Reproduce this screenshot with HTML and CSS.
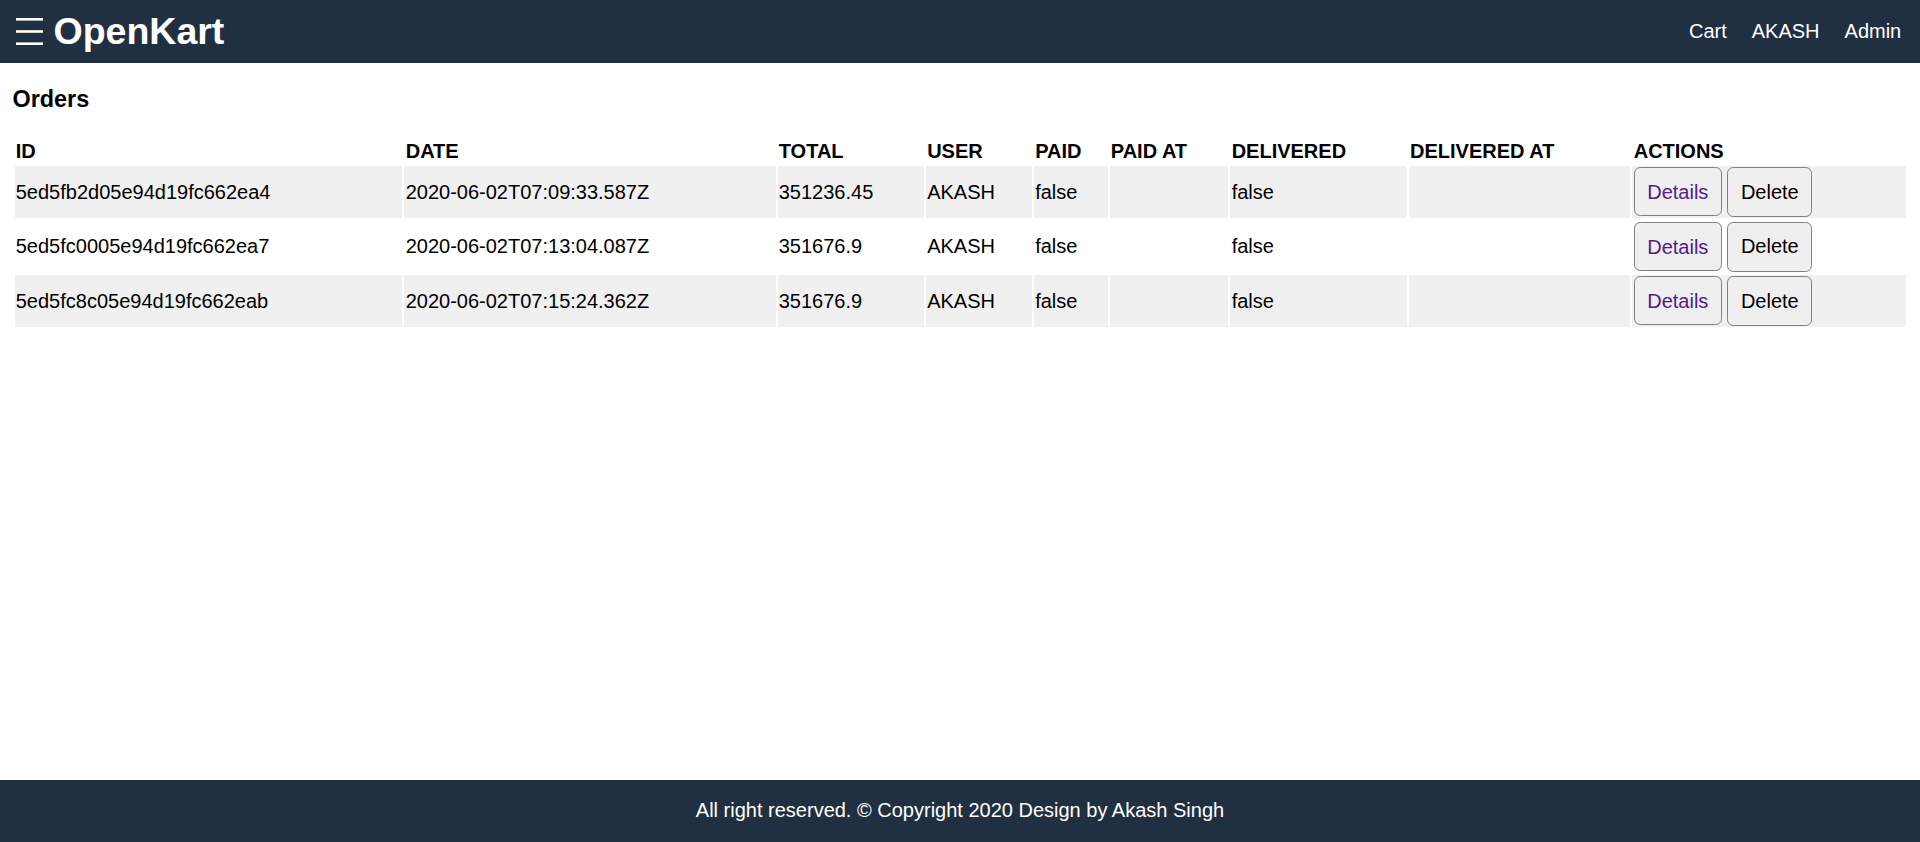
FILE: index.html
```html
<!DOCTYPE html>
<html lang="en">
<head>
<meta charset="utf-8">
<title>OpenKart</title>
<link rel="stylesheet" href="styles.css">
</head>
<body>
<div class="grid-container">
  <header class="header">
    <div class="brand">
      <button class="menu-btn" aria-label="menu">
        <svg width="27" height="27" viewBox="0 0 27 27"><rect x="0" y="0" width="27" height="2.6" fill="#fff"/><rect x="0" y="12.2" width="27" height="2.6" fill="#fff"/><rect x="0" y="24.4" width="27" height="2.6" fill="#fff"/></svg>
      </button>
      <a href="#" class="brand-link">OpenKart</a>
    </div>
    <nav class="header-links"><a href="#">Cart</a><a href="#">AKASH</a><a href="#">Admin</a></nav>
  </header>
  <main class="main">
    <div class="content content-margined">
      <div class="order-header">
        <h3>Orders</h3>
      </div>
      <table class="table">
        <thead>
          <tr>
            <th>ID</th>
            <th>DATE</th>
            <th>TOTAL</th>
            <th>USER</th>
            <th>PAID</th>
            <th>PAID AT</th>
            <th>DELIVERED</th>
            <th>DELIVERED AT</th>
            <th>ACTIONS</th>
          </tr>
        </thead>
        <tbody>
          <tr>
            <td>5ed5fb2d05e94d19fc662ea4</td>
            <td>2020-06-02T07:09:33.587Z</td>
            <td>351236.45</td>
            <td>AKASH</td>
            <td>false</td>
            <td></td>
            <td>false</td>
            <td></td>
            <td><a href="#" class="button link-btn">Details</a> <button class="button">Delete</button></td>
          </tr>
          <tr>
            <td>5ed5fc0005e94d19fc662ea7</td>
            <td>2020-06-02T07:13:04.087Z</td>
            <td>351676.9</td>
            <td>AKASH</td>
            <td>false</td>
            <td></td>
            <td>false</td>
            <td></td>
            <td><a href="#" class="button link-btn">Details</a> <button class="button">Delete</button></td>
          </tr>
          <tr>
            <td>5ed5fc8c05e94d19fc662eab</td>
            <td>2020-06-02T07:15:24.362Z</td>
            <td>351676.9</td>
            <td>AKASH</td>
            <td>false</td>
            <td></td>
            <td>false</td>
            <td></td>
            <td><a href="#" class="button link-btn">Details</a> <button class="button">Delete</button></td>
          </tr>
        </tbody>
      </table>
    </div>
  </main>
  <footer class="footer">All right reserved. &copy; Copyright 2020 Design by Akash Singh</footer>
</div>
</body>
</html>
```
FILE: styles.css
```css
html {
  box-sizing: border-box;
}
*, *::before, *::after {
  box-sizing: inherit;
}
body {
  margin: 0;
  height: 100vh;
  font-family: "Liberation Sans", Arial, Helvetica, sans-serif;
  font-size: 20px;
  color: #000;
}
.grid-container {
  display: grid;
  grid-template-areas: "header" "main" "footer";
  grid-template-columns: 1fr;
  grid-template-rows: 62.5px 1fr 62.5px;
  height: 100%;
}
.header {
  grid-area: header;
  background-color: #203040;
  color: #fff;
  display: flex;
  justify-content: space-between;
  align-items: center;
  padding: 6.25px;
}
.brand {
  display: flex;
  align-items: center;
}
.menu-btn {
  background: none;
  border: none;
  padding: 0 8px 0 9.75px;
  margin: 0;
  cursor: pointer;
  display: flex;
  align-items: center;
}
.menu-btn svg {
  display: block;
}
.brand-link {
  color: #fff;
  font-size: 37.5px;
  font-weight: bold;
  text-decoration: none;
  padding-left: 2.5px;
}
.header-links a {
  color: #fff;
  text-decoration: none;
  padding: 12.5px;
}
.main {
  grid-area: main;
}
.content-margined {
  margin: 12.5px;
}
.order-header h3 {
  font-size: 23.4px;
  margin: 23.4px 0;
}
.table {
  width: 100%;
  border-spacing: 2.5px;
}
.table th {
  text-align: left;
  padding: 1.25px;
}
.table td {
  padding: 1.25px;
}
.table tbody > tr:nth-child(odd) {
  background-color: #f0f0f0;
}
.button {
  padding: 12.5px;
  border: 1.25px solid #808080;
  border-radius: 6.25px;
  background-color: #efefef;
  font-family: inherit;
  font-size: 20px;
  color: #000;
  cursor: pointer;
}
.link-btn {
  color: #551a8b;
  text-decoration: none;
}
.footer {
  grid-area: footer;
  background-color: #203040;
  color: #fff;
  display: flex;
  justify-content: center;
  align-items: center;
}
```
